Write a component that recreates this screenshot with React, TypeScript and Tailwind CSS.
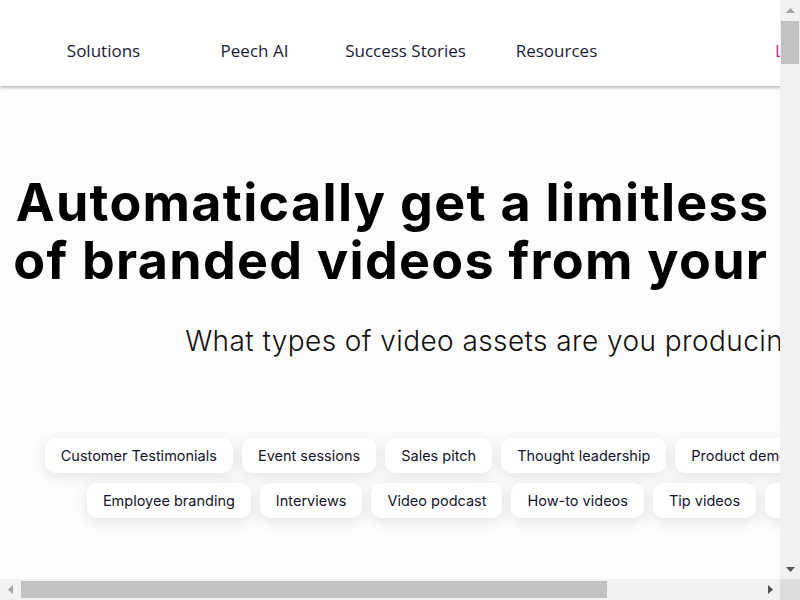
const navItems = ['Solutions', 'Peech AI', 'Success Stories', 'Resources'];

const rowOne = ['Customer Testimonials', 'Event sessions', 'Sales pitch', 'Thought leadership', 'Product demo', 'Webinar replays'];
const rowTwo = ['Employee branding', 'Interviews', 'Video podcast', 'How-to videos', 'Tip videos', 'Social media ads'];

function Chip({ label }: { label: string }) {
  return (
    <button className="h-[35px] shrink-0 rounded-[10px] bg-white px-[16px] text-[14.5px] text-[#15152b] shadow-[0_3px_14px_rgba(40,30,60,0.12)] whitespace-nowrap">
      {label}
    </button>
  );
}

// little triangles used on the scrollbar buttons
function Arrow({ dir, color }: { dir: 'up' | 'down' | 'left' | 'right'; color: string }) {
  const pts = {
    up: '0,6 4.5,1 9,6',
    down: '0,1 4.5,6 9,1',
    left: '6,0 1,4.5 6,9',
    right: '1,0 6,4.5 1,9',
  }[dir];
  const vertical = dir === 'up' || dir === 'down';
  return (
    <svg width={vertical ? 9 : 7} height={vertical ? 7 : 9} viewBox={vertical ? '0 0 9 7' : '0 0 7 9'}>
      <polygon points={pts} fill={color} />
    </svg>
  );
}

export default function App() {
  return (
    <div className="grid h-[600px] w-[800px] grid-cols-[1fr_20px] grid-rows-[1fr_21px] overflow-hidden bg-[#fdfcfd]">
      {/* Page viewport */}
      <div className="overflow-hidden">
        <div className="w-[1000px] min-h-[7200px]" style={{ fontFamily: 'Inter, sans-serif' }}>
          {/* Top bar */}
          <header className="h-[86px] bg-white shadow-[0_2px_3px_rgba(0,0,0,0.25)] flex items-center pl-[28px] pt-[16px] pr-8">
            {navItems.map((n) => (
              <a
                key={n}
                href="#"
                className="w-[151px] shrink-0 text-center text-[17px] text-[#1b1b38] whitespace-nowrap"
                style={{ fontFamily: '"Open Sans", sans-serif' }}
              >
                {n}
              </a>
            ))}
            <a
              href="#"
              className="ml-[143px] shrink-0 text-[17px] text-[#c0259c] whitespace-nowrap"
              style={{ fontFamily: '"Open Sans", sans-serif' }}
            >
              Log in
            </a>
            <a
              href="#"
              className="ml-6 shrink-0 rounded-full bg-[#c0259c] px-5 py-2 text-[15px] font-semibold text-white whitespace-nowrap"
              style={{ fontFamily: '"Open Sans", sans-serif' }}
            >
              Book a demo
            </a>
          </header>

          {/* Hero */}
          <section className="flex flex-col items-center pt-[88px] text-center">
            <h1 className="text-[52px] font-bold leading-[58px] tracking-[0.025em] text-black whitespace-nowrap">
              Automatically get a limitless amount
              <br />
              of branded videos from your content
            </h1>
            <p className="mt-[30px] text-[28px] font-light tracking-[0.015em] text-[#111] whitespace-nowrap">
              What types of video assets are you producing?
            </p>

            <div className="mt-[76px] flex flex-col items-center gap-[10px]">
              <div className="flex gap-[9px]">
                {rowOne.map((c) => (
                  <Chip key={c} label={c} />
                ))}
              </div>
              <div className="flex gap-[9px]">
                {rowTwo.map((c) => (
                  <Chip key={c} label={c} />
                ))}
              </div>
            </div>
          </section>
        </div>
      </div>

      {/* Vertical scrollbar */}
      <div className="flex flex-col bg-[#f1f0f2]">
        <div className="flex h-[20px] items-center justify-center">
          <Arrow dir="up" color="#a3a3a3" />
        </div>
        <div className="mx-[1px] mt-[1px] h-[43px] bg-[#c1c0c3]" />
        <div className="flex-1" />
        <div className="flex h-[20px] items-center justify-center">
          <Arrow dir="down" color="#505050" />
        </div>
      </div>

      {/* Horizontal scrollbar */}
      <div className="flex bg-[#f1f0f2]">
        <div className="flex w-[20px] items-center justify-center">
          <Arrow dir="left" color="#a3a3a3" />
        </div>
        <div className="my-[2px] ml-[1px] w-[586px] bg-[#c1c0c3]" />
        <div className="flex-1" />
        <div className="flex w-[20px] items-center justify-center">
          <Arrow dir="right" color="#505050" />
        </div>
      </div>

      {/* Corner */}
      <div className="bg-[#dcdcdc]" />
    </div>
  );
}
